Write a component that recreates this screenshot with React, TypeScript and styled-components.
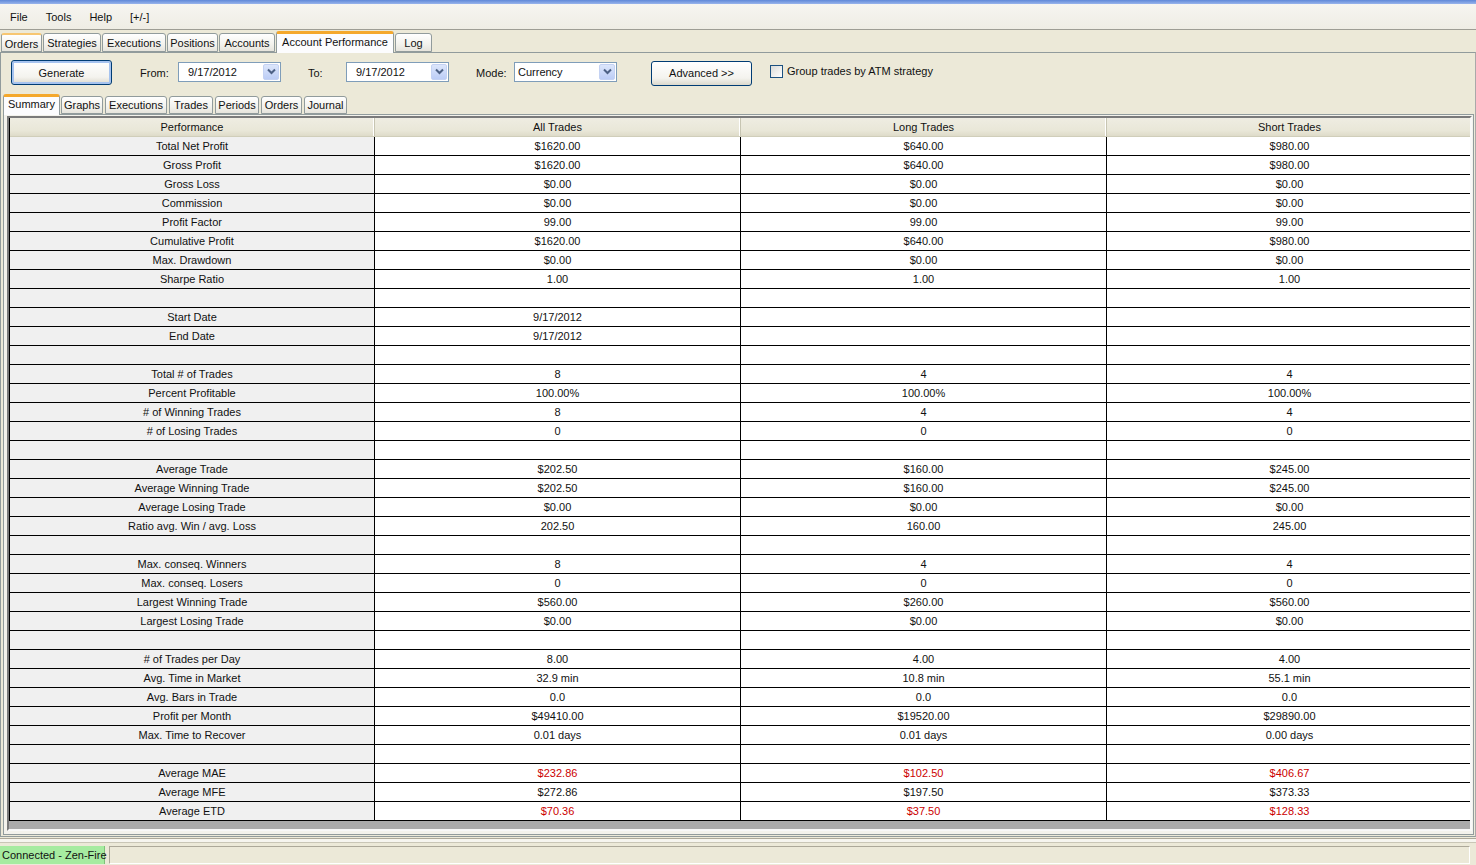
import React from "react";
import styled, { createGlobalStyle } from "styled-components";

const GlobalStyle = createGlobalStyle`
  html, body {
    margin: 0;
    padding: 0;
    background: #ece9d8;
  }
  body {
    font-family: "Liberation Sans", Arial, sans-serif;
    font-size: 11px;
    color: #111;
  }
`;

type Row = { label: string; values: string[]; red?: boolean };

const rows: Row[] = [
  { label: "Total Net Profit", values: ["$1620.00", "$640.00", "$980.00"] },
  { label: "Gross Profit", values: ["$1620.00", "$640.00", "$980.00"] },
  { label: "Gross Loss", values: ["$0.00", "$0.00", "$0.00"] },
  { label: "Commission", values: ["$0.00", "$0.00", "$0.00"] },
  { label: "Profit Factor", values: ["99.00", "99.00", "99.00"] },
  { label: "Cumulative Profit", values: ["$1620.00", "$640.00", "$980.00"] },
  { label: "Max. Drawdown", values: ["$0.00", "$0.00", "$0.00"] },
  { label: "Sharpe Ratio", values: ["1.00", "1.00", "1.00"] },
  { label: "", values: ["", "", ""] },
  { label: "Start Date", values: ["9/17/2012", "", ""] },
  { label: "End Date", values: ["9/17/2012", "", ""] },
  { label: "", values: ["", "", ""] },
  { label: "Total # of Trades", values: ["8", "4", "4"] },
  { label: "Percent Profitable", values: ["100.00%", "100.00%", "100.00%"] },
  { label: "# of Winning Trades", values: ["8", "4", "4"] },
  { label: "# of Losing Trades", values: ["0", "0", "0"] },
  { label: "", values: ["", "", ""] },
  { label: "Average Trade", values: ["$202.50", "$160.00", "$245.00"] },
  { label: "Average Winning Trade", values: ["$202.50", "$160.00", "$245.00"] },
  { label: "Average Losing Trade", values: ["$0.00", "$0.00", "$0.00"] },
  { label: "Ratio avg. Win / avg. Loss", values: ["202.50", "160.00", "245.00"] },
  { label: "", values: ["", "", ""] },
  { label: "Max. conseq. Winners", values: ["8", "4", "4"] },
  { label: "Max. conseq. Losers", values: ["0", "0", "0"] },
  { label: "Largest Winning Trade", values: ["$560.00", "$260.00", "$560.00"] },
  { label: "Largest Losing Trade", values: ["$0.00", "$0.00", "$0.00"] },
  { label: "", values: ["", "", ""] },
  { label: "# of Trades per Day", values: ["8.00", "4.00", "4.00"] },
  { label: "Avg. Time in Market", values: ["32.9 min", "10.8 min", "55.1 min"] },
  { label: "Avg. Bars in Trade", values: ["0.0", "0.0", "0.0"] },
  { label: "Profit per Month", values: ["$49410.00", "$19520.00", "$29890.00"] },
  { label: "Max. Time to Recover", values: ["0.01 days", "0.01 days", "0.00 days"] },
  { label: "", values: ["", "", ""] },
  { label: "Average MAE", values: ["$232.86", "$102.50", "$406.67"], red: true },
  { label: "Average MFE", values: ["$272.86", "$197.50", "$373.33"] },
  { label: "Average ETD", values: ["$70.36", "$37.50", "$128.33"], red: true },
];

const mainTabs = [
  { name: "Orders", width: 41, hot: true },
  { name: "Strategies", width: 58 },
  { name: "Executions", width: 64 },
  { name: "Positions", width: 51 },
  { name: "Accounts", width: 56 },
  { name: "Account Performance", width: 118, active: true },
  { name: "Log", width: 37 },
];

const subTabs = [
  { name: "Summary", width: 57, active: true },
  { name: "Graphs", width: 42 },
  { name: "Executions", width: 62 },
  { name: "Trades", width: 44 },
  { name: "Periods", width: 44 },
  { name: "Orders", width: 41 },
  { name: "Journal", width: 43 },
];

const ChevronDown = () => (
  <svg width="9" height="7" viewBox="0 0 9 7">
    <path d="M1 1.5 L4.5 5 L8 1.5" fill="none" stroke="#4d6185" strokeWidth="2" />
  </svg>
);

export default function App() {
  return (
    <Window>
      <GlobalStyle />
      <TitleEdge />
      <MenuBar>
        <MenuItem>File</MenuItem>
        <MenuItem>Tools</MenuItem>
        <MenuItem>Help</MenuItem>
        <MenuItem>[+/-]</MenuItem>
      </MenuBar>
      <MenuRule />
      <TabStrip>
        {mainTabs.map((t) => (
          <Tab key={t.name} $width={t.width} $active={!!t.active} $hot={!!t.hot}>
            {t.name}
          </Tab>
        ))}
      </TabStrip>
      <MainPanel>
        <Toolbar>
          <Button $default>Generate</Button>
          <FieldLabel $gap={28}>From:</FieldLabel>
          <Combo $pad={9}>
            <ComboText>9/17/2012</ComboText>
            <ComboArrow>
              <ChevronDown />
            </ComboArrow>
          </Combo>
          <FieldLabel $gap={27}>To:</FieldLabel>
          <Combo $pad={9}>
            <ComboText>9/17/2012</ComboText>
            <ComboArrow>
              <ChevronDown />
            </ComboArrow>
          </Combo>
          <FieldLabel $gap={27}>Mode:</FieldLabel>
          <Combo $pad={3}>
            <ComboText>Currency</ComboText>
            <ComboArrow>
              <ChevronDown />
            </ComboArrow>
          </Combo>
          <AdvancedButton>Advanced &gt;&gt;</AdvancedButton>
          <CheckRow>
            <CheckBox />
            <span>Group trades by ATM strategy</span>
          </CheckRow>
        </Toolbar>
        <SubTabStrip>
          {subTabs.map((t) => (
            <SubTab key={t.name} $width={t.width} $active={!!t.active}>
              {t.name}
            </SubTab>
          ))}
        </SubTabStrip>
        <SubPanel>
          <GridFrame>
            <Grid>
              <HeadCell>Performance</HeadCell>
              <HeadCell>All Trades</HeadCell>
              <HeadCell>Long Trades</HeadCell>
              <HeadCell $last>Short Trades</HeadCell>
              {rows.map((r, i) => (
                <React.Fragment key={i}>
                  <LabelCell>{r.label}</LabelCell>
                  {r.values.map((v, j) => (
                    <ValueCell key={j} $red={!!r.red}>
                      {v}
                    </ValueCell>
                  ))}
                </React.Fragment>
              ))}
            </Grid>
          </GridFrame>
        </SubPanel>
      </MainPanel>
      <StatusRule />
      <StatusBar>
        <ConnState>Connected - Zen-Fire</ConnState>
        <StatusPane />
      </StatusBar>
    </Window>
  );
}

const Window = styled.div`
  width: 1476px;
  height: 865px;
  display: flex;
  flex-direction: column;
  overflow: hidden;
  background: #ece9d8;
`;

const TitleEdge = styled.div`
  height: 4px;
  background: linear-gradient(#5f88d8, #98b4ec);
`;

const MenuBar = styled.div`
  height: 25px;
  display: flex;
  align-items: center;
  gap: 18px;
  padding-left: 10px;
  background: linear-gradient(#f6f5f1, #efede4);
`;

const MenuItem = styled.span`
  font-size: 11px;
`;

const MenuRule = styled.div`
  height: 1px;
  background: #9e9d94;
`;

const TabStrip = styled.div`
  height: 22px;
  display: flex;
  align-items: flex-end;
  padding-left: 1px;
`;

const Tab = styled.div<{ $width: number; $active: boolean; $hot: boolean }>`
  box-sizing: border-box;
  width: ${(p) => p.$width}px;
  height: ${(p) => (p.$active ? 22 : 19)}px;
  margin-right: 1px;
  margin-bottom: ${(p) => (p.$active ? -1 : 0)}px;
  display: flex;
  align-items: center;
  justify-content: center;
  padding-top: ${(p) => (p.$active ? 0 : 1)}px;
  padding-bottom: ${(p) => (p.$active ? 4 : 0)}px;
  border: 1px solid #919b9c;
  border-bottom: ${(p) => (p.$active ? "none" : "1px solid #919b9c")};
  border-top: ${(p) =>
    p.$active ? "3px solid #f4a82c" : p.$hot ? "2px solid #f7c671" : "1px solid #919b9c"};
  border-radius: 3px 3px 0 0;
  background: ${(p) =>
    p.$active ? "#fcfcfe" : "linear-gradient(#ffffff, #f3f2ed 60%, #e6e4dc)"};
  position: relative;
  z-index: ${(p) => (p.$active ? 1 : 0)};
  white-space: nowrap;
`;

const MainPanel = styled.div`
  flex: 1;
  display: flex;
  flex-direction: column;
  border: 1px solid #919b9c;
  border-right-color: #a9a9a9;
  background: #ece9d8;
  min-height: 0;
`;

const Toolbar = styled.div`
  height: 41px;
  display: flex;
  align-items: center;
  padding-left: 10px;
  padding-bottom: 2px;
  box-sizing: border-box;
`;

const Button = styled.div<{ $default?: boolean }>`
  box-sizing: border-box;
  width: 101px;
  height: 25px;
  display: flex;
  align-items: center;
  justify-content: center;
  border: 1px solid #003c74;
  border-radius: 3px;
  background: linear-gradient(#ffffff, #f4f3ee 70%, #dcd9cd);
  box-shadow: ${(p) => (p.$default ? "inset 0 0 0 2px #a6c3ef" : "none")};
`;

const AdvancedButton = styled(Button)`
  margin-left: 34px;
  margin-top: 1px;
`;

const FieldLabel = styled.span<{ $gap: number }>`
  width: 38px;
  margin-left: ${(p) => p.$gap}px;
`;

const Combo = styled.div<{ $pad: number }>`
  box-sizing: border-box;
  width: 103px;
  height: 20px;
  display: flex;
  align-items: center;
  padding-left: ${(p) => p.$pad}px;
  border: 1px solid #7f9db9;
  background: #fff;
  margin-top: -2px;
`;

const ComboText = styled.span`
  flex: 1;
`;

const ComboArrow = styled.div`
  width: 16px;
  height: 16px;
  margin-right: 1px;
  display: flex;
  align-items: center;
  justify-content: center;
  border-radius: 2px;
  background: linear-gradient(#dce6fb, #bccdf6);
  border: 1px solid #c4d2f3;
  box-sizing: border-box;
`;

const CheckRow = styled.label`
  margin-left: 18px;
  margin-top: -3px;
  display: flex;
  align-items: center;
  gap: 4px;
`;

const CheckBox = styled.span`
  box-sizing: border-box;
  width: 13px;
  height: 13px;
  border: 1px solid #1c5180;
  background: linear-gradient(135deg, #dcdcd7, #ffffff);
`;

const SubTabStrip = styled.div`
  height: 20px;
  display: flex;
  align-items: flex-end;
  padding-left: 2px;
`;

const SubTab = styled.div<{ $width: number; $active: boolean }>`
  box-sizing: border-box;
  width: ${(p) => p.$width}px;
  height: ${(p) => (p.$active ? 21 : 18)}px;
  margin-right: ${(p) => (p.$active ? 1 : 2)}px;
  margin-bottom: ${(p) => (p.$active ? -1 : 0)}px;
  display: flex;
  align-items: center;
  justify-content: center;
  padding-bottom: ${(p) => (p.$active ? 4 : 0)}px;
  border: 1px solid #919b9c;
  border-bottom: ${(p) => (p.$active ? "none" : "1px solid #919b9c")};
  border-top: ${(p) => (p.$active ? "3px solid #f4a82c" : "1px solid #919b9c")};
  border-radius: 3px 3px 0 0;
  background: ${(p) =>
    p.$active ? "#fcfcfe" : "linear-gradient(#ffffff, #f3f2ed 60%, #e6e4dc)"};
  position: relative;
  z-index: ${(p) => (p.$active ? 1 : 0)};
  white-space: nowrap;
`;

const SubPanel = styled.div`
  flex: 1;
  display: flex;
  margin: 0 1px 1px 2px;
  padding: 1px 1px 3px 3px;
  border: 1px solid #919b9c;
  background: #f3f2ec;
  min-height: 0;
`;

const GridFrame = styled.div`
  flex: 1;
  border: 2px solid;
  border-color: #7a7a7a #f8f8f8 #f8f8f8 #7a7a7a;
  background: #ababab;
  overflow: hidden;
`;

const Grid = styled.div`
  display: grid;
  grid-template-columns: 365px 366px 366px 366px;
  grid-auto-rows: 19px;
  border-left: 1px solid #000;
  width: 1464px;
  box-sizing: border-box;
`;

const HeadCell = styled.div<{ $last?: boolean }>`
  display: flex;
  align-items: center;
  justify-content: center;
  box-sizing: border-box;
  background: linear-gradient(#efede2, #e9e7d8 70%, #dedbc9);
  border-right: 1px solid ${(p) => (p.$last ? "#000" : "#c7c5b2")};
  box-shadow: inset -1px 0 0 #fff;
  border-bottom: 1px solid #d0ceba;
`;

const LabelCell = styled.div`
  display: flex;
  align-items: center;
  justify-content: center;
  box-sizing: border-box;
  background: #f0f0f0;
  border-right: 1px solid #000;
  border-bottom: 1px solid #000;
  white-space: nowrap;
`;

const ValueCell = styled(LabelCell)<{ $red: boolean }>`
  background: #fff;
  color: ${(p) => (p.$red ? "#cc0000" : "#111")};
`;

const StatusRule = styled.div`
  height: 3px;
  margin-top: 1px;
  border-top: 1px solid #aca899;
  border-bottom: 1px solid #c9c6b6;
  background: #f6f5ef;
`;

const StatusBar = styled.div`
  height: 18px;
  margin-top: 3px;
  margin-bottom: 1px;
  display: flex;
  gap: 4px;
  box-sizing: border-box;
`;

const ConnState = styled.div`
  width: 105px;
  box-sizing: border-box;
  display: flex;
  align-items: center;
  padding-left: 2px;
  background: #a6eba0;
  border-right: 1px solid #7fc27a;
  white-space: nowrap;
`;

const StatusPane = styled.div`
  flex: 1;
  margin-right: 6px;
  border: 1px solid;
  border-color: #aca899 #fff #fff #aca899;
`;
